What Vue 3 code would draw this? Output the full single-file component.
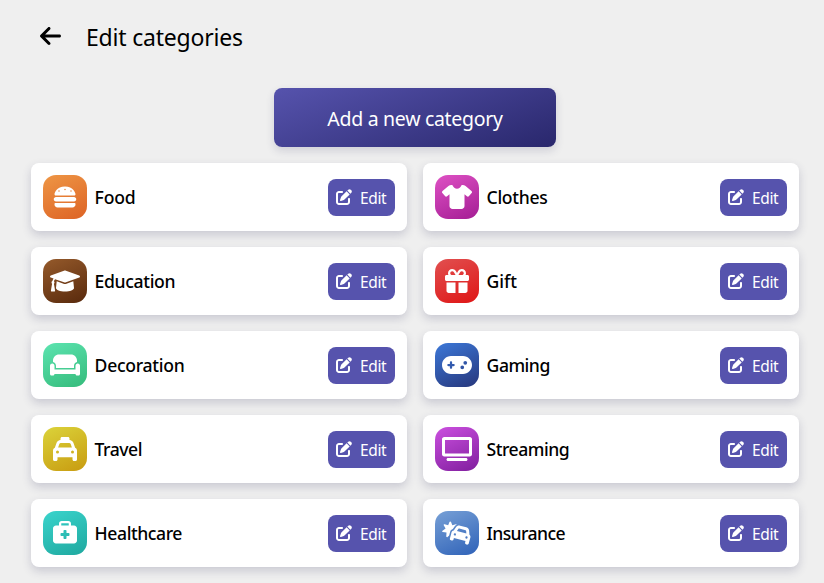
<script setup>
const categories = [
  { name: 'Food', from: '#ee9645', to: '#dd6325', width: 512, spacing: -0.22,
    icon: 'M61.1 224C45 224 32 211 32 194.9c0-1.9 .2-3.7 .6-5.6C37.9 168.3 78.8 32 256 32s218.1 136.3 223.4 157.3c.5 1.9 .6 3.7 .6 5.6c0 16.1-13 29.1-29.1 29.1H61.1zM144 128a16 16 0 1 0 -32 0 16 16 0 1 0 32 0zm240 16a16 16 0 1 0 0-32 16 16 0 1 0 0 32zM272 96a16 16 0 1 0 -32 0 16 16 0 1 0 32 0zM16 304c0-26.5 21.5-48 48-48H448c26.5 0 48 21.5 48 48s-21.5 48-48 48H64c-26.5 0-48-21.5-48-48zm16 96c0-8.8 7.2-16 16-16H464c8.8 0 16 7.2 16 16v16c0 35.3-28.7 64-64 64H96c-35.3 0-64-28.7-64-64V400z' },
  { name: 'Clothes', from: '#de51c4', to: '#a41d94', width: 640, spacing: -0.33,
    icon: 'M211.8 0c7.8 0 14.3 5.7 16.7 13.2C240.8 51.9 277.1 80 320 80s79.2-28.1 91.5-66.8C413.9 5.7 420.4 0 428.2 0h12.6c22.5 0 44.2 7.9 61.5 22.3L628.5 127.4c6.6 5.5 10.7 13.5 11.4 22.1s-2.1 17.1-7.8 23.6l-56 64c-11.4 13.1-31.2 14.6-44.6 3.5L480 197.7V448c0 35.3-28.7 64-64 64H224c-35.3 0-64-28.7-64-64V197.7l-51.5 42.9c-13.3 11.1-33.1 9.6-44.6-3.5l-56-64c-5.7-6.5-8.5-15-7.8-23.6s4.8-16.6 11.4-22.1L137.7 22.3C155 7.9 176.7 0 199.2 0h12.6z' },
  { name: 'Education', from: '#955a2b', to: '#58290c', width: 640, spacing: -0.35,
    icon: 'M623.1 136.9l-282.7-101.2c-13.73-4.91-28.7-4.91-42.43 0L16.05 136.9C6.438 140.4 0 149.6 0 160s6.438 19.65 16.05 23.09L76.07 204.6c-11.89 15.8-20.26 34.16-24.55 53.95C40.05 263.4 32 274.8 32 288c0 9.953 4.814 18.49 11.94 24.36l-24.83 149C17.48 471.1 25 480 34.89 480H93.11c9.887 0 17.41-8.879 15.78-18.63l-24.83-149C91.19 306.5 96 297.1 96 288c0-10.29-5.174-19.03-12.72-24.89c4.252-17.76 12.88-33.82 24.94-47.03l190.6 68.23c13.73 4.91 28.7 4.91 42.43 0l282.7-101.2C633.6 179.6 640 170.4 640 160S633.6 140.4 623.1 136.9zM351.1 314.4C341.7 318.1 330.9 320 320 320c-10.92 0-21.69-1.867-32-5.555L142.8 262.5L128 405.3C128 446.6 213.1 480 320 480c105.1 0 192-33.4 192-74.67l-14.78-142.9L351.1 314.4z' },
  { name: 'Gift', from: '#e15050', to: '#df1515', width: 512, spacing: -0.05,
    icon: 'M190.5 68.8L225.3 128H224 152c-22.1 0-40-17.9-40-40s17.9-40 40-40h2.2c14.9 0 28.8 7.9 36.3 20.8zM64 88c0 14.4 3.5 28 9.6 40H32c-17.7 0-32 14.3-32 32v64c0 17.7 14.3 32 32 32H480c17.7 0 32-14.3 32-32V160c0-17.7-14.3-32-32-32H438.4c6.1-12 9.6-25.6 9.6-40c0-48.6-39.4-88-88-88h-2.2c-31.9 0-61.5 16.9-77.7 44.4L256 85.5l-24.1-41C215.7 16.9 186.1 0 154.2 0H152C103.4 0 64 39.4 64 88zm336 0c0 22.1-17.9 40-40 40H288h-1.3l34.8-59.2C329.1 55.9 342.9 48 357.8 48H360c22.1 0 40 17.9 40 40zM32 288V464c0 26.5 21.5 48 48 48H224V288H32zM288 512H432c26.5 0 48-21.5 48-48V288H288V512z' },
  { name: 'Decoration', from: '#5ce4b0', to: '#35bb7b', width: 640, spacing: -0.3,
    icon: 'M64 160C64 89.3 121.3 32 192 32H448c70.7 0 128 57.3 128 128v33.6c-36.5 7.4-64 39.7-64 78.4v48H128V272c0-38.7-27.5-71-64-78.4V160zM544 272c0-20.9 13.4-38.7 32-45.3c5-1.8 10.4-2.7 16-2.7c26.5 0 48 21.5 48 48V448c0 17.7-14.3 32-32 32H576c-17.7 0-32-14.3-32-32H96c0 17.7-14.3 32-32 32H32c-17.7 0-32-14.3-32-32V272c0-26.5 21.5-48 48-48c5.6 0 11 1 16 2.7c18.6 6.6 32 24.4 32 45.3v48 32h32H512h32V320 272z' },
  { name: 'Gaming', from: '#3c78d8', to: '#27377c', width: 640, spacing: -0.5,
    icon: 'M192 64C86 64 0 150 0 256S86 448 192 448H448c106 0 192-86 192-192s-86-192-192-192H192zM496 168a40 40 0 1 1 0 80 40 40 0 1 1 0-80zM392 304a40 40 0 1 1 80 0 40 40 0 1 1 -80 0zM168 200c0-13.3 10.7-24 24-24s24 10.7 24 24v32h32c13.3 0 24 10.7 24 24s-10.7 24-24 24H216v32c0 13.3-10.7 24-24 24s-24-10.7-24-24V280H136c-13.3 0-24-10.7-24-24s10.7-24 24-24h32V200z' },
  { name: 'Travel', from: '#dbd33a', to: '#c89b10', width: 512, spacing: -0.5,
    icon: 'M192 0c-17.7 0-32 14.3-32 32V64c0 .1 0 .1 0 .2c-38.6 2.2-72.3 27.3-85.2 64.1L39.6 228.8C16.4 238.4 0 261.3 0 288V432v48c0 17.7 14.3 32 32 32H64c17.7 0 32-14.3 32-32V432H416v48c0 17.7 14.3 32 32 32h32c17.7 0 32-14.3 32-32V432 288c0-26.7-16.4-49.6-39.6-59.2L437.2 128.3c-12.9-36.8-46.6-62-85.2-64.1c0-.1 0-.1 0-.2V32c0-17.7-14.3-32-32-32H192zM165.4 128H346.6c13.6 0 25.7 8.6 30.2 21.4L402.9 224H109.1l26.1-74.6c4.5-12.8 16.6-21.4 30.2-21.4zM96 288a32 32 0 1 1 0 64 32 32 0 1 1 0-64zm288 32a32 32 0 1 1 64 0 32 32 0 1 1 -64 0z' },
  { name: 'Streaming', from: '#cb50df', to: '#801e9e', width: 640, spacing: -0.5,
    icon: 'M512 448H127.1C110.3 448 96 462.3 96 479.1S110.3 512 127.1 512h384C529.7 512 544 497.7 544 480S529.7 448 512 448zM592 0h-544C21.5 0 0 21.5 0 48v320C0 394.5 21.5 416 48 416h544c26.5 0 48-21.5 48-48v-320C640 21.5 618.5 0 592 0zM576 352H64v-288h512V352z' },
  { name: 'Healthcare', from: '#3ad4cc', to: '#1fa89f', width: 512, spacing: -0.43,
    icon: 'M184 48H328c4.4 0 8 3.6 8 8V96H176V56c0-4.4 3.6-8 8-8zm-56 8V96H64C28.7 96 0 124.7 0 160V416c0 35.3 28.7 64 64 64H448c35.3 0 64-28.7 64-64V160c0-35.3-28.7-64-64-64H384V56c0-30.9-25.1-56-56-56H184c-30.9 0-56 25.1-56 56zm96 152c0-8.8 7.2-16 16-16h32c8.8 0 16 7.2 16 16v48h48c8.8 0 16 7.2 16 16v32c0 8.8-7.2 16-16 16H288v48c0 8.8-7.2 16-16 16H240c-8.8 0-16-7.2-16-16V320H176c-8.8 0-16-7.2-16-16V272c0-8.8 7.2-16 16-16h48V208z' },
  { name: 'Insurance', from: '#77a0d6', to: '#2f62b8', width: 640, spacing: -0.6,
    icon: 'M176 8c-6.6 0-12.4 4-14.9 10.1l-29.4 74L55.6 68.9c-6.3-1.9-13.1 .2-17.2 5.3s-4.6 12.2-1.4 17.9l39.5 69.1L10.9 206.4c-5.4 3.7-8 10.3-6.5 16.7s6.7 11.2 13.1 12.2l78.7 12.2L90.6 327c-.5 6.5 3.1 12.7 9 15.5s12.9 1.8 17.8-2.6l35.3-32.5 9.5-35.4 10.4-38.6c8-29.9 30.5-52.1 57.9-60.9l41-59.2c11.3-16.3 26.4-28.9 43.5-37.2c-.4-.6-.8-1.2-1.3-1.8c-4.1-5.1-10.9-7.2-17.2-5.3L220.3 92.1l-29.4-74C188.4 12 182.6 8 176 8zM367.7 161.5l135.6 36.3c6.5 1.8 11.3 7.4 11.8 14.2l4.6 56.5-201.5-54 32.2-46.6c3.8-5.6 10.8-8.1 17.3-6.4zm-69.9-30l-47.9 69.3c-21.6 3-40.3 18.6-46.3 41l-10.4 38.6-16.6 61.8-8.3 30.9c-4.6 17.1 5.6 34.6 22.6 39.2l15.5 4.1c17.1 4.6 34.6-5.6 39.2-22.6l8.3-30.9 247.3 66.3-8.3 30.9c-4.6 17.1 5.6 34.6 22.6 39.2l15.5 4.1c17.1 4.6 34.6-5.6 39.2-22.6l8.3-30.9L595 388l10.4-38.6c6-22.4-2.5-45.2-19.6-58.7l-6.8-84c-2.7-33.7-26.4-62-59-70.8L384.2 99.7c-32.7-8.8-67.3 4-86.5 31.8zm-17 131a24 24 0 1 1 -12.4 46.4 24 24 0 1 1 12.4-46.4zm217.9 83.2A24 24 0 1 1 545 358.1a24 24 0 1 1 -46.4-12.4z' },
]
</script>

<template>
  <main class="page">
    <header class="header">
      <svg class="back" viewBox="0 0 448 512"><path d="M9.4 233.4c-12.5 12.5-12.5 32.8 0 45.3l160 160c12.5 12.5 32.8 12.5 45.3 0s12.5-32.8 0-45.3L109.2 288 416 288c17.7 0 32-14.3 32-32s-14.3-32-32-32l-306.7 0L214.6 118.6c12.5-12.5 12.5-32.8 0-45.3s-32.8-12.5-45.3 0l-160 160z" /></svg>
      <h1 class="title">Edit categories</h1>
    </header>
    <button class="add"><span>Add a new category</span></button>
    <section class="grid">
      <article v-for="c in categories" :key="c.name" class="card">
        <div class="badge" :style="{ backgroundImage: `linear-gradient(155deg, ${c.from}, ${c.to})` }">
          <svg class="glyph" :viewBox="`0 0 ${c.width} 512`"><path :d="c.icon" /></svg>
        </div>
        <span class="name" :style="{ letterSpacing: `${c.spacing}px` }">{{ c.name }}</span>
        <button class="edit">
          <svg class="pen" viewBox="0 0 512 512"><path d="M471.6 21.7c-21.9-21.9-57.3-21.9-79.2 0L362.3 51.7l97.9 97.9 30.1-30.1c21.9-21.9 21.9-57.3 0-79.2L471.6 21.7zm-299.2 220c-6.1 6.1-10.8 13.6-13.5 21.9l-29.6 88.8c-2.9 8.6-.6 18.1 5.8 24.6s15.9 8.7 24.6 5.8l88.8-29.6c8.2-2.7 15.7-7.4 21.9-13.5L437.7 172.3 339.7 74.3 172.4 241.7zM96 64C43 64 0 107 0 160V416c0 53 43 96 96 96H352c53 0 96-43 96-96V320c0-17.7-14.3-32-32-32s-32 14.3-32 32v96c0 17.7-14.3 32-32 32H96c-17.7 0-32-14.3-32-32V160c0-17.7 14.3-32 32-32h96c17.7 0 32-14.3 32-32s-14.3-32-32-32H96z" /></svg>
          <span>Edit</span>
        </button>
      </article>
    </section>
  </main>
</template>

<style>
body {
  background: #efefef;
  overflow: hidden;
}
</style>

<style scoped>
.page {
  box-sizing: border-box;
  height: 583px;
  overflow: hidden;
  padding: 20px 25px 0 31px;
  display: flex;
  flex-direction: column;
  background: #efefef;
  font-family: "Noto Sans", "Open Sans", sans-serif;
  color: #000;
}
.header {
  display: flex;
  align-items: center;
  height: 34px;
  padding-left: 9px;
  flex: none;
}
.back {
  width: 21px;
  height: 24px;
  margin-top: -2px;
}
.title {
  margin: 0 0 0 25px;
  font-size: 23px;
  line-height: 34px;
  font-weight: 400;
  letter-spacing: -0.2px;
  white-space: nowrap;
}
button {
  border: 0;
  padding: 0;
  color: #fff;
  font-family: inherit;
}
.add {
  align-self: center;
  flex: none;
  width: 282px;
  height: 59px;
  margin: 34px 0 16px;
  border-radius: 8px;
  background: linear-gradient(160deg, #5653ad, #29276c);
  box-shadow: 0 4px 8px rgba(50, 50, 93, 0.16);
  font-size: 19.5px;
  letter-spacing: -0.3px;
  line-height: 28px;
  padding-top: 3px;
}
.grid {
  display: grid;
  grid-template-columns: 1fr 1fr;
  gap: 16px;
}
.card {
  box-sizing: border-box;
  height: 68px;
  padding: 12px;
  display: flex;
  align-items: center;
  background: #fff;
  border-radius: 8px;
  box-shadow: 0 4px 10px rgba(50, 50, 93, 0.2);
}
.badge {
  width: 44px;
  height: 44px;
  border-radius: 13px;
  display: flex;
  align-items: center;
  justify-content: center;
}
.glyph {
  height: 24px;
  fill: #fff;
}
.name {
  flex: 1;
  margin-left: 7.6px;
  padding-bottom: 1px;
  font-size: 17.6px;
  line-height: 24px;
  font-weight: 500;
}
.edit {
  width: 67px;
  height: 37px;
  border-radius: 8px;
  background: #5653ad;
  display: flex;
  align-items: center;
  padding-left: 8px;
  font-size: 15.5px;
  letter-spacing: -0.35px;
  line-height: 22px;
}
.edit span {
  margin-left: 8px;
  padding-top: 1px;
}
.pen {
  width: 16px;
  height: 16px;
  fill: #fff;
}
</style>
